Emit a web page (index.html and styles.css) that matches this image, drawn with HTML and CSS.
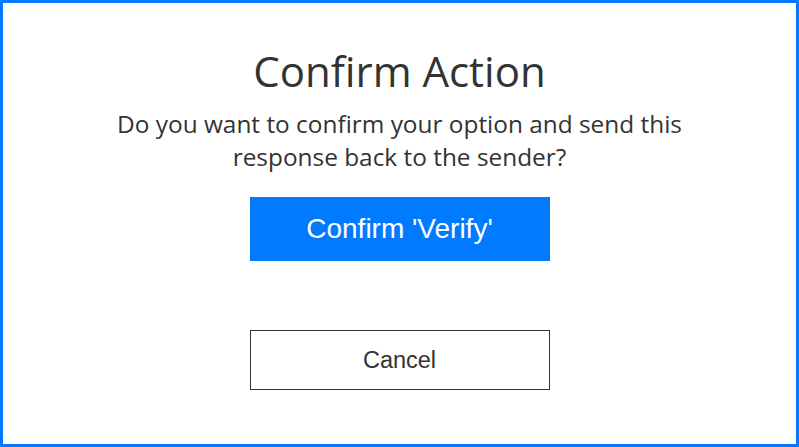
FILE: index.html
```html
<!DOCTYPE html>
<html>
<head>
<meta charset="utf-8">
<link rel="stylesheet" href="styles.css">
</head>
<body>
<div class="frame">
  <h1 class="title">Confirm Action</h1>
  <p class="message">Do you want to confirm your option and send this<br>response back to the sender?</p>
  <button class="btn btn-primary">Confirm 'Verify'</button>
  <button class="btn btn-secondary">Cancel</button>
</div>
</body>
</html>
```
FILE: styles.css
```css
html, body {
  margin: 0;
  padding: 0;
  background: #fff;
}
.frame {
  box-sizing: border-box;
  width: 799px;
  height: 447px;
  border: 3px solid #007bff;
  display: flex;
  flex-direction: column;
  align-items: center;
  padding-top: 41px;
  font-family: "Open Sans", "Noto Sans", sans-serif;
  color: #333;
}
.title {
  margin: 0;
  font-size: 42px;
  font-weight: 400;
  line-height: 54px;
}
.message {
  margin: 0;
  margin-top: 9px;
  font-size: 24.4px;
  line-height: 33px;
  text-align: center;
}
.btn {
  box-sizing: border-box;
  width: 300px;
  font-family: "Liberation Sans", Arial, sans-serif;
  cursor: pointer;
}
.btn-primary {
  margin-top: 24px;
  height: 64px;
  background: #007bff;
  color: #fff;
  border: none;
  font-size: 28px;
}
.btn-secondary {
  margin-top: 69px;
  height: 60px;
  background: #fff;
  color: #333;
  border: 1px solid #333;
  font-size: 23.5px;
}
```
